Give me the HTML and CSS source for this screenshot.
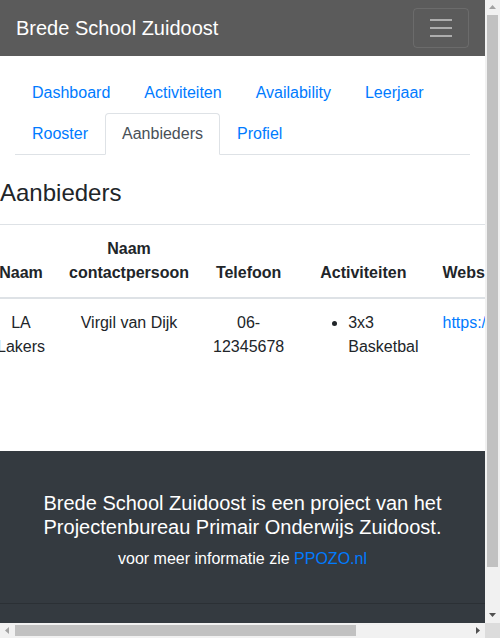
FILE: index.html
```html
<!DOCTYPE html>
<html lang="nl">
<head>
<meta charset="utf-8">
<title>Aanbieders - Brede School Zuidoost</title>
<link rel="stylesheet" href="styles.css">
</head>
<body class="screen">
<div class="viewport">
  <header class="navbar">
    <a class="brand" href="#">Brede School Zuidoost</a>
    <button class="toggler" type="button" aria-label="Menu">
      <svg class="toggler-icon" viewBox="0 0 30 30" width="30" height="30"><path d="M4 7h22M4 15h22M4 23h22" stroke="rgba(255,255,255,.5)" stroke-width="2" fill="none"/></svg>
    </button>
  </header>

  <div class="tabs-wrap">
    <ul class="tabs">
      <li class="tab"><a class="tab-link" href="#">Dashboard</a></li>
      <li class="tab"><a class="tab-link" href="#">Activiteiten</a></li>
      <li class="tab"><a class="tab-link" href="#">Availability</a></li>
      <li class="tab"><a class="tab-link" href="#">Leerjaar</a></li>
      <li class="tab"><a class="tab-link" href="#">Rooster</a></li>
      <li class="tab"><a class="tab-link active" href="#">Aanbieders</a></li>
      <li class="tab"><a class="tab-link" href="#">Profiel</a></li>
    </ul>
  </div>

  <main class="content">
    <h4 class="page-title">Aanbieders</h4>
    <div class="table-wrap">
      <table class="data-table">
        <thead>
          <tr>
            <th>Naam</th>
            <th>Naam contactpersoon</th>
            <th>Telefoon</th>
            <th>Activiteiten</th>
            <th class="col-left">Website</th>
          </tr>
        </thead>
        <tbody>
          <tr>
            <td>LA Lakers</td>
            <td>Virgil van Dijk</td>
            <td>06-12345678</td>
            <td><ul class="act-list"><li>3x3 Basketbal</li></ul></td>
            <td class="col-left"><a class="url" href="#">https://www.nba.com/lakers</a></td>
          </tr>
        </tbody>
      </table>
    </div>
  </main>

  <footer class="footer">
    <div class="footer-main">
      <h5 class="footer-title">Brede School Zuidoost is een project van het Projectenbureau Primair Onderwijs Zuidoost.</h5>
      <p class="footer-info">voor meer informatie zie <a href="#">PPOZO.nl</a></p>
    </div>
    <div class="footer-bottom"></div>
  </footer>
</div>

<div class="vscroll">
  <svg class="sb-btn" viewBox="0 0 15 15" width="15" height="15"><polygon points="4,9 11,9 7.5,5" fill="#a3a3a3"/></svg>
  <div class="vtrack"><div class="vthumb"></div></div>
  <svg class="sb-btn" viewBox="0 0 15 15" width="15" height="15"><polygon points="4,5 11,5 7.5,9" fill="#505050"/></svg>
</div>

<div class="hscroll">
  <svg class="sb-btn" viewBox="0 0 15 15" width="15" height="15"><polygon points="9,4 9,11 5,7.5" fill="#a3a3a3"/></svg>
  <div class="htrack"><div class="hthumb"></div></div>
  <svg class="sb-btn" viewBox="0 0 15 15" width="15" height="15"><polygon points="6,4 6,11 10,7.5" fill="#505050"/></svg>
</div>

<div class="sb-corner"></div>
</body>
</html>
```

FILE: styles.css
```css
* { box-sizing: border-box; }

html, body {
  margin: 0;
  padding: 0;
}

body {
  font-family: "Liberation Sans", Arial, sans-serif;
  font-size: 16px;
  line-height: 1.5;
  color: #212529;
  background: #fff;
}

.screen {
  display: grid;
  grid-template-columns: 485px 15px;
  grid-template-rows: 623px 15px;
  width: 500px;
  height: 638px;
  overflow: hidden;
}

.viewport {
  overflow: hidden;
  min-width: 0;
  min-height: 0;
}

a { color: #007bff; text-decoration: none; }

/* scrollbars */
.vscroll {
  display: flex;
  flex-direction: column;
  background: #f1f1f1;
}

.hscroll {
  display: flex;
  background: #f1f1f1;
}

.sb-btn { display: block; flex: none; }

.vtrack {
  flex: 1;
  padding: 0 2px;
}

.vthumb {
  height: 552px;
  background: #c1c1c1;
}

.htrack {
  flex: 1;
  padding: 2px 0;
}

.hthumb {
  width: 341px;
  height: 100%;
  background: #c1c1c1;
}

.sb-corner { background: #dcdcdc; }

/* navbar */
.navbar {
  display: flex;
  align-items: center;
  justify-content: space-between;
  background: #5b5b5b;
  padding: 8px 16px;
  height: 56px;
}

.brand {
  color: #fff;
  font-size: 20px;
  line-height: 30px;
  padding: 5px 0;
}

.toggler {
  display: flex;
  align-items: center;
  justify-content: center;
  width: 56px;
  height: 40px;
  padding: 4px 12px;
  background: transparent;
  border: 1px solid rgba(255,255,255,.1);
  border-radius: 4px;
}

.toggler-icon { display: block; width: 30px; height: 30px; }

/* tabs */
.tabs-wrap {
  padding: 16px 15px 0;
}

.tabs {
  display: flex;
  flex-wrap: wrap;
  list-style: none;
  margin: 0;
  padding: 0;
  border-bottom: 1px solid #dee2e6;
}

.tab { margin-bottom: -1px; }

.tab-link {
  display: block;
  padding: 8px 16px;
  line-height: 24px;
  border: 1px solid transparent;
  border-top-left-radius: 4px;
  border-top-right-radius: 4px;
}

.tab-link.active {
  color: #495057;
  background: #fff;
  border-color: #dee2e6 #dee2e6 #fff;
}

/* content */
.content {
  padding-bottom: 80px;
}

.page-title {
  margin: 24px 0 16px;
  font-size: 24px;
  font-weight: 400;
  line-height: 1.2;
}

.table-wrap {
  margin-left: -15px;
}

.data-table {
  width: 100%;
  border-collapse: collapse;
}

.data-table th,
.data-table td {
  padding: 12px;
  text-align: center;
  border-top: 1px solid #dee2e6;
}

.data-table th {
  vertical-align: bottom;
  font-weight: 700;
  border-bottom: 2px solid #dee2e6;
}

.data-table td { vertical-align: top; }

.data-table .col-left { text-align: left; }

.url { white-space: nowrap; }

.act-list {
  margin: 0;
  padding-left: 40px;
  text-align: left;
}

/* footer */
.footer {
  background: #343a40;
  color: #fff;
  text-align: center;
}

.footer-main {
  padding: 40px 15px 32px;
}

.footer-title {
  margin: 0 0 8px;
  font-size: 20px;
  font-weight: 400;
  line-height: 24px;
}

.footer-info {
  margin: 0;
}

.footer-bottom {
  height: 66px;
  border-top: 1px solid #2b3035;
}
```
